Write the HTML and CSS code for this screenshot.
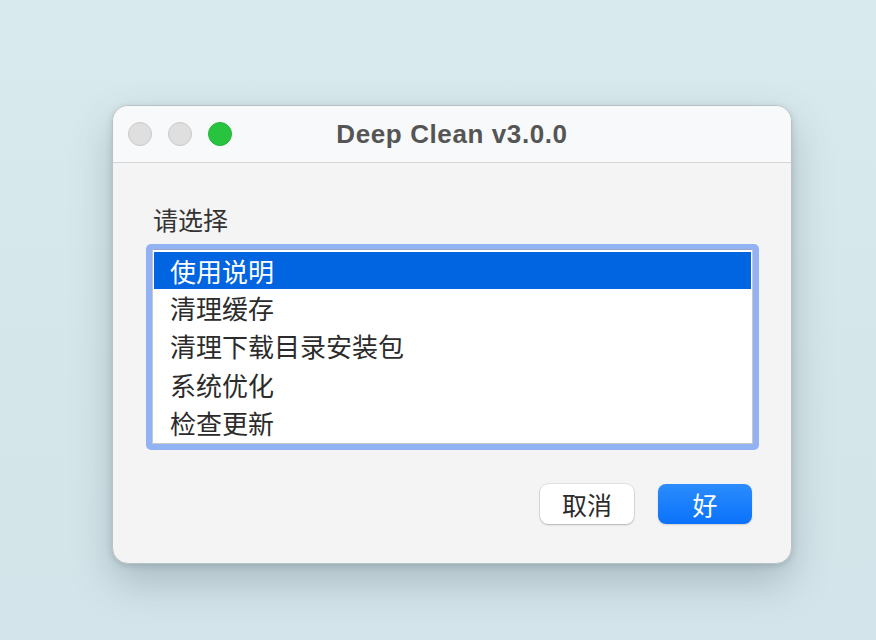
FILE: index.html
```html
<!DOCTYPE html>
<html lang="zh">
<head>
<meta charset="utf-8">
<link rel="stylesheet" href="styles.css">
</head>
<body>
<div class="stage">
  <div class="window">
    <div class="titlebar">
      <div class="lights">
        <span class="light grey"></span>
        <span class="light grey"></span>
        <span class="light green"></span>
      </div>
      <div class="title">Deep Clean v3.0.0</div>
    </div>
    <div class="content">
      <div class="label">请选择</div>
      <div class="focus">
        <ul class="list">
          <li class="row selected">使用说明</li>
          <li class="row">清理缓存</li>
          <li class="row">清理下载目录安装包</li>
          <li class="row">系统优化</li>
          <li class="row">检查更新</li>
        </ul>
      </div>
      <div class="buttons">
        <button class="btn cancel">取消</button>
        <button class="btn ok">好</button>
      </div>
    </div>
  </div>
</div>
</body>
</html>
```
FILE: styles.css
```css
html, body {
  margin: 0;
  padding: 0;
}
body {
  width: 876px;
  height: 640px;
  overflow: hidden;
  background: linear-gradient(180deg, #d9eaee 0%, #d5e6ea 60%, #d3e5ea 100%);
  font-family: "Noto Sans CJK SC", "Noto Sans", sans-serif;
}
.stage {
  padding: 105px 0 0 112px;
}
.window {
  width: 680px;
  height: 459px;
  box-sizing: border-box;
  border-radius: 16px;
  background: #f4f4f4;
  border: 1px solid #b9c2c4;
  box-shadow: 0 18px 40px rgba(60, 80, 90, 0.28), 0 2px 6px rgba(60, 80, 90, 0.2);
  overflow: hidden;
  display: flex;
  flex-direction: column;
}
.titlebar {
  height: 56px;
  flex: none;
  background: #f8f9fa;
  border-bottom: 1px solid #d3d5d7;
  position: relative;
  display: flex;
  align-items: center;
}
.lights {
  display: flex;
  gap: 16px;
  padding-left: 15px;
}
.light {
  width: 24px;
  height: 24px;
  border-radius: 50%;
  box-sizing: border-box;
}
.light.grey {
  background: #dfdfdf;
  border: 1px solid #c9c9c9;
}
.light.green {
  background: #29c43f;
  border: 1px solid #23b238;
}
.title {
  position: absolute;
  left: 0;
  right: 0;
  top: 0;
  bottom: 0;
  display: flex;
  align-items: center;
  justify-content: center;
  font-family: "Liberation Sans", Arial, sans-serif;
  font-weight: bold;
  font-size: 26px;
  letter-spacing: 0.6px;
  color: #555555;
}
.content {
  flex: 1;
  padding: 36px 32px 0 33px;
  display: flex;
  flex-direction: column;
}
.label {
  font-size: 25px;
  line-height: 40px;
  color: #333333;
  padding-left: 7px;
  height: 40px;
}
.focus {
  margin-top: 5px;
  background: #92b2f4;
  border-radius: 5px;
  padding: 5px 6px 6px 6px;
}
.list {
  list-style: none;
  margin: 0;
  padding: 2px 1px 1px 1px;
  background: #ffffff;
  border: 1px solid #c8c8c8;
  border-top-color: #9aa6c8;
}
.row {
  height: 38.3px;
  line-height: 38px;
  font-size: 26px;
  color: #2b2b2b;
  padding-left: 16px;
  white-space: nowrap;
}
.row.selected {
  background: #0164e0;
  color: #ffffff;
  height: 37px;
  line-height: 37px;
}
.buttons {
  display: flex;
  justify-content: flex-end;
  gap: 24px;
  margin-top: 34px;
  padding-right: 7px;
}
.btn {
  width: 94px;
  height: 40px;
  border-radius: 8px;
  font-family: "Noto Sans CJK SC", sans-serif;
  font-size: 25px;
  border: none;
  padding: 0;
  line-height: 40px;
}
.btn.cancel {
  background: #ffffff;
  color: #2b2b2b;
  box-shadow: 0 0 0 0.5px rgba(0, 0, 0, 0.15), 0 1px 2px rgba(0, 0, 0, 0.2);
}
.btn.ok {
  background: linear-gradient(180deg, #2b8cfd 0%, #0a72fa 100%);
  color: #ffffff;
  box-shadow: 0 1px 2px rgba(0, 0, 0, 0.15);
}
```
